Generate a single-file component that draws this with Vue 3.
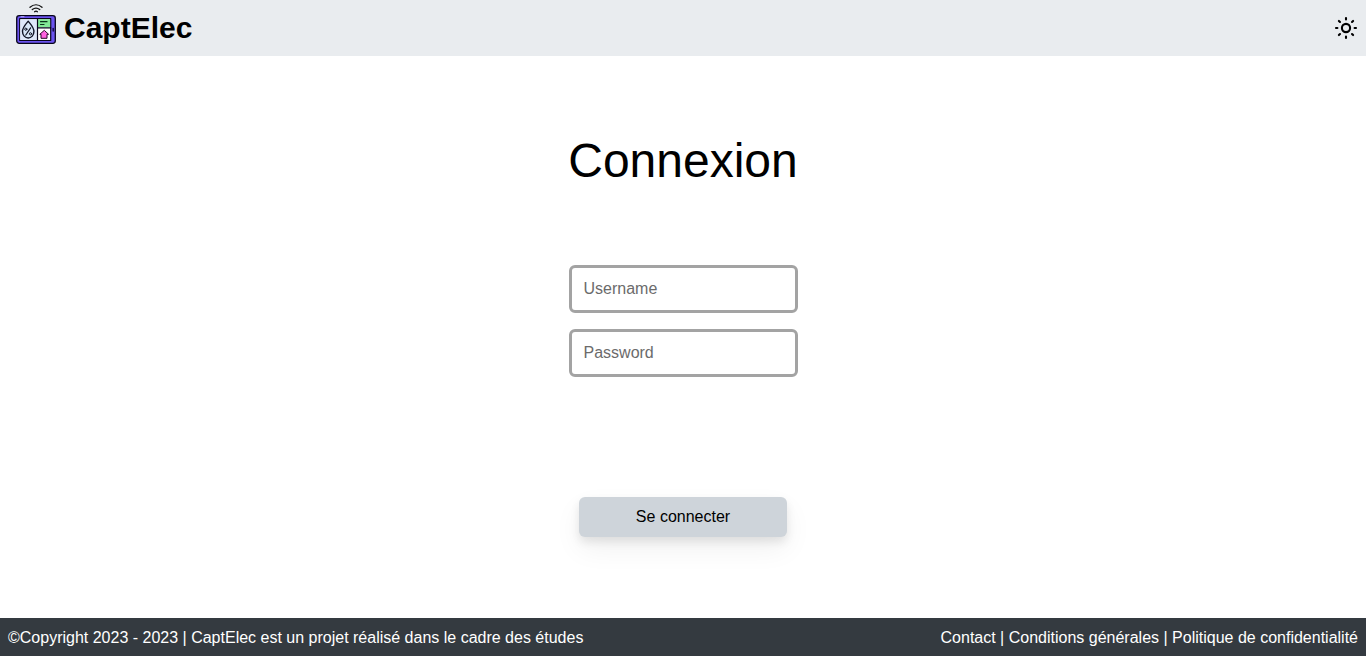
<script setup>
import { ref } from 'vue'

const username = ref('')
const password = ref('')
const links = ['Contact', 'Conditions générales', 'Politique de confidentialité']
</script>

<template>
  <div class="page">
    <header class="header">
      <a class="brand">
        <svg class="logo" viewBox="0 0 40 40" fill="none" stroke-linecap="round" stroke-linejoin="round">
          <path d="M14 3.3C17.6.1 22.4.1 26 3.3M16.3 5.6c2.4-2 5-2 7.4 0" stroke="#111" stroke-width="1.3" />
          <path d="M18.6 7.7c.9-.7 1.9-.7 2.8 0" stroke="#111" stroke-width="1.3" />
          <rect x=".7" y="11.7" width="38.6" height="27.6" rx="2.5" fill="#6c54f0" stroke="#08051c" stroke-width="1.3" />
          <path d="M5 12.7h3" stroke="#b9aefa" stroke-width="1" />
          <rect x="3.7" y="14.7" width="31" height="21.8" fill="#fff" stroke="#08051c" stroke-width="1.2" />
          <path d="M4.3 15.3h16.6v20.6H4.3z" fill="#dfe7fa" />
          <path d="M22 15.3h12.1v8H22z" fill="#82e896" />
          <path d="M21.5 15V36.5M21.5 23.8h13.2" stroke="#08051c" stroke-width="1.2" />
          <path d="M24.5 17.7h6.5M24.5 20.5h3.5" stroke="#0b321c" stroke-width="1.2" />
          <path d="M12.2 17.2c-2.6 3.1-5.7 6.3-5.7 10.3a5.7 6.5 0 0 0 11.4 0c0-4-3.1-7.2-5.7-10.3z" fill="#d8e5f7" stroke="#111426" stroke-width="1.4" />
          <path d="m14.6 23.8-4.8 7.2" stroke="#111426" stroke-width="1.2" />
          <circle cx="9.8" cy="25.2" r="1.1" stroke="#111426" />
          <circle cx="14.5" cy="29.8" r="1.1" stroke="#111426" />
          <path d="m28 26.6-4.2 3.7H25v4h6v-4h1.2z" fill="#ff62df" stroke="#2b0729" stroke-width="1" />
          <path d="M37.2 24.5v2.5" stroke="#160a48" stroke-width="1.5" />
        </svg>
        <span class="name">CaptElec</span>
      </a>
      <button class="theme" aria-label="Thème">
        <svg width="24" height="24" viewBox="0 0 24 24" fill="none" stroke="#000" stroke-width="2.1" stroke-linecap="round">
          <circle cx="12" cy="12" r="4.1" />
          <path d="M12 2v1.4M12 20.6V22M2 12h1.4M20.6 12H22M4.9 4.9l1.1 1.1M18 18l1.1 1.1M4.9 19.1 6 18M18 6l1.1-1.1" />
        </svg>
      </button>
    </header>

    <main class="main">
      <h1>Connexion</h1>
      <form @submit.prevent>
        <div class="fields">
          <input v-model="username" type="text" placeholder="Username">
          <input v-model="password" type="password" placeholder="Password">
        </div>
        <button class="submit" type="submit">Se connecter</button>
      </form>
    </main>

    <footer class="footer">
      <span>©Copyright 2023 - 2023 | CaptElec est un projet réalisé dans le cadre des études</span>
      <nav>
        <template v-for="(link, i) in links" :key="link"><span v-if="i"> | </span><a>{{ link }}</a></template>
      </nav>
    </footer>
  </div>
</template>

<style>
body {
  background: #fff;
}
</style>

<style scoped>
.page {
  height: 100vh;
  display: flex;
  flex-direction: column;
  overflow: hidden;
  font: 16px/24px "Liberation Sans", Arial, sans-serif;
  color: #000;
}
.header {
  box-sizing: border-box;
  height: 56px;
  padding: 0 8px 0 16px;
  display: flex;
  align-items: center;
  justify-content: space-between;
  background: #e9ecef;
}
.brand {
  display: flex;
  align-items: center;
  gap: 8px;
}
.logo {
  width: 40px;
  height: 40px;
  margin-top: -8px;
}
.name {
  font-size: 30px;
  line-height: 36px;
  font-weight: 700;
}
.theme {
  display: flex;
  padding: 0;
  border: 0;
  background: none;
}
.main {
  flex: 1;
  display: flex;
  flex-direction: column;
  align-items: center;
}
h1 {
  margin: 81px 0 80px;
  font-size: 48px;
  line-height: 48px;
  font-weight: 400;
}
form {
  display: flex;
  flex-direction: column;
  align-items: center;
}
.fields {
  display: flex;
  flex-direction: column;
  gap: 16px;
}
input {
  box-sizing: border-box;
  width: 229px;
  height: 48px;
  padding: 0 12px;
  border: 3px solid #a3a3a3;
  border-radius: 6px;
  background: #fff;
  font: inherit;
}
input::placeholder {
  color: #6b6b6b;
}
.submit {
  width: 208px;
  height: 40px;
  margin-top: 120px;
  padding: 0 0 1px;
  border: 0;
  border-radius: 6px;
  background: #ced4da;
  color: #000;
  font: inherit;
  box-shadow: 0 12px 28px rgb(0 0 0 / .06), 0 5px 10px rgb(0 0 0 / .09);
}
.footer {
  box-sizing: border-box;
  height: 38px;
  padding: 1px 8px 0;
  display: flex;
  align-items: center;
  justify-content: space-between;
  background: #343a40;
  color: #fff;
}
.footer span {
  white-space: pre;
}
</style>
